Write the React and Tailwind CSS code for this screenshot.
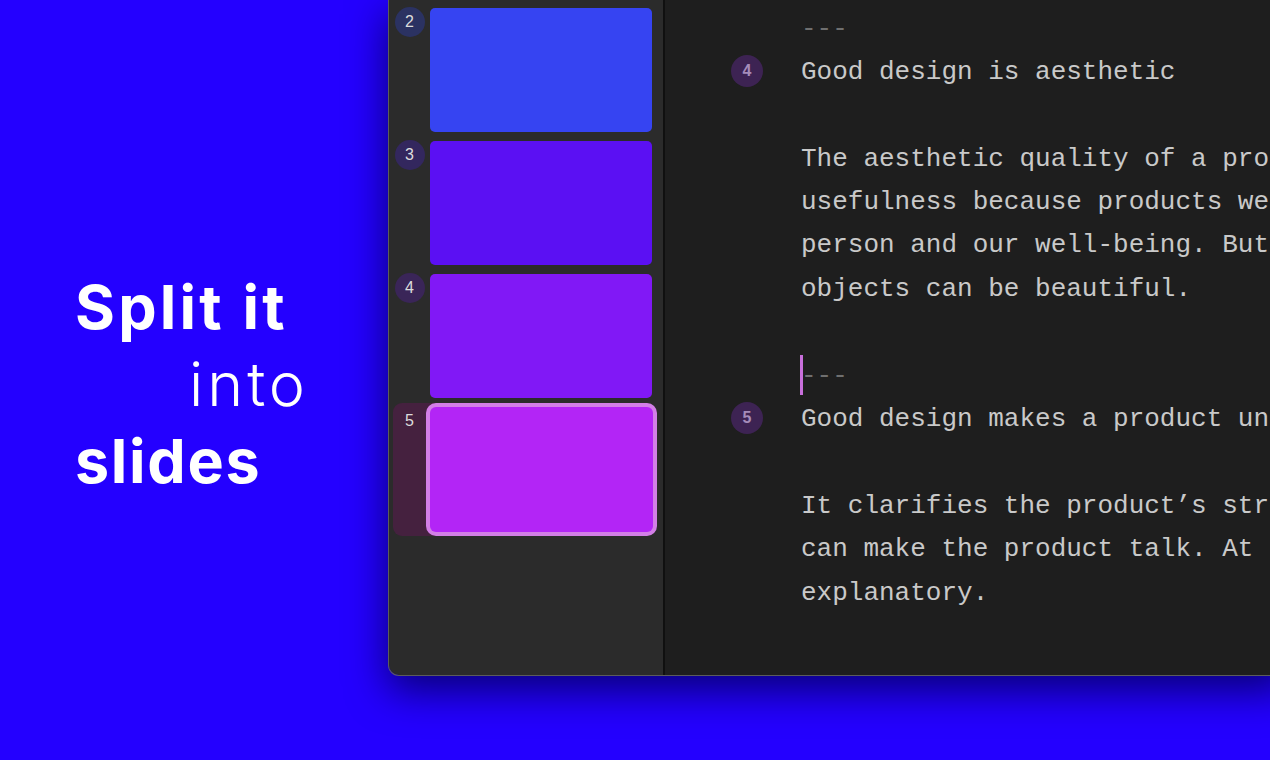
import React from "react";

const slides = [
    { n: 2, color: "bg-[#3644f2]", badge: "bg-[#2b3262]" },
    { n: 3, color: "bg-[#5b10f3]", badge: "bg-[#33275e]" },
    { n: 4, color: "bg-[#8118f6]", badge: "bg-[#3a2558]" },
    { n: 5, color: "bg-[#b325f6]", active: true },
];

const lines = [
    { text: "---", dim: true },
    { text: "Good design is aesthetic", badge: 4 },
    { text: "" },
    { text: "The aesthetic quality of a product is integral to its" },
    { text: "usefulness because products we use every day affect our" },
    { text: "person and our well-being. But only well-executed" },
    { text: "objects can be beautiful." },
    { text: "" },
    { text: "---", dim: true, cursor: true },
    { text: "Good design makes a product understandable", badge: 5 },
    { text: "" },
    { text: "It clarifies the product\u2019s structure. Better still, it" },
    { text: "can make the product talk. At best, it is self-" },
    { text: "explanatory." },
];

function Sidebar() {
    return (
        <div className="w-[274px] shrink-0 bg-[#2b2b2b] pt-[8px] pl-[4px] pr-[10px] flex flex-col gap-[9px]">
            {slides.map((s) => (
                <div
                    key={s.n}
                    className={
                        s.active
                            ? "flex gap-[4px] -my-1 py-1 rounded-[9px] bg-[#45213f]"
                            : "flex gap-[4px]"
                    }
                >
                    <div className="w-[33px] shrink-0 flex justify-center">
                        <div
                            className={`w-[30px] h-[30px] -mt-[1px] rounded-full flex items-center justify-center text-[16px] text-[#dcdcdc] ${s.badge || ""}`}
                            style={{ fontFamily: '"Liberation Sans", Arial, sans-serif' }}
                        >
                            {s.n}
                        </div>
                    </div>
                    <div
                        className={
                            s.active
                                ? `w-[223px] h-[125px] rounded-[6px] ${s.color} ring-4 ring-[#d37fe7]`
                                : `w-[222px] h-[124px] rounded-[5px] ${s.color}`
                        }
                    />
                </div>
            ))}
        </div>
    );
}

function Editor() {
    return (
        <div
            className="flex-1 bg-[#1e1e1e] pt-[7.5px] text-[26px] text-[#c9c9c9] overflow-hidden"
            style={{ fontFamily: '"Liberation Mono", "DejaVu Sans Mono", monospace' }}
        >
            {lines.map((l, i) => (
                <div key={i} className="flex items-center h-[43.4px] leading-[43.4px]">
                    <div className="w-[136px] shrink-0 pl-[66px] flex items-center">
                        {l.badge && (
                            <div
                                className="w-[32px] h-[32px] -mt-[4px] rounded-full bg-[#3d2353] flex items-center justify-center text-[16px] font-bold text-[#a58cb9]"
                                style={{ fontFamily: '"Liberation Sans", Arial, sans-serif' }}
                            >
                                {l.badge}
                            </div>
                        )}
                    </div>
                    <div className={`relative whitespace-pre ${l.dim ? "text-[#6f6f6f]" : ""}`}>
                        {l.cursor && (
                            <span className="absolute left-[-1px] top-[0px] w-[3px] h-[40px] bg-[#c86fdb]" />
                        )}
                        {l.text || " "}
                    </div>
                </div>
            ))}
        </div>
    );
}

export default function App() {
    return (
        <div className="w-full h-[760px] bg-[#2400ff] flex overflow-hidden">
            {/* Headline */}
            <div
                className="w-[388px] shrink-0 pt-[269px] pl-[75px] text-white text-[61px] leading-[77px]"
                style={{ fontFamily: "Inter, 'Liberation Sans', sans-serif" }}
            >
                <div className="font-bold tracking-[3.2px]">Split it</div>
                <div className="font-light pl-[114px] tracking-[4px]">into</div>
                <div className="font-bold tracking-[1.7px]">slides</div>
            </div>

            {/* App window */}
            <div className="w-[900px] h-[676px] shrink-0 flex rounded-bl-[11px] border-l border-b border-[#5c5c5c] overflow-hidden shadow-[0_14px_40px_rgba(0,0,70,0.75)]">
                <Sidebar />
                <div className="w-[2px] shrink-0 bg-[#101010]" />
                <Editor />
            </div>
        </div>
    );
}
